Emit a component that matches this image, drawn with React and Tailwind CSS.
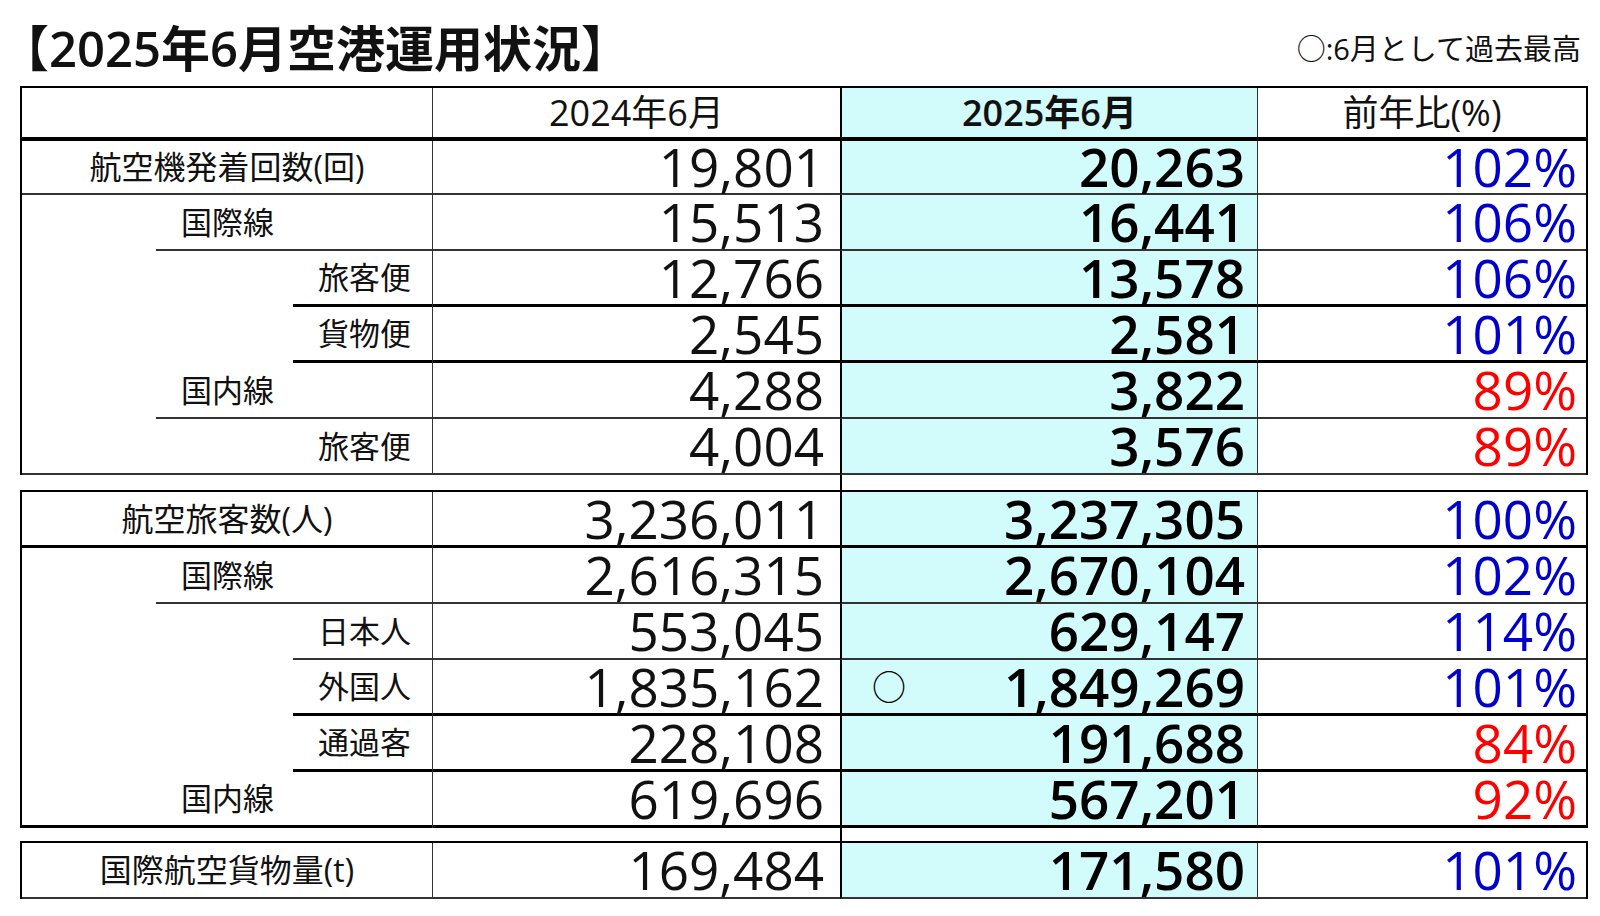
const sections = [
  [
    { label: '航空機発着回数(回)', align: 'center', indent: 0, line: 'thin', h: 'h-[54px]', a: '19,801', b: '20,263', pct: '102%', up: true },
    { label: '国際線', align: 'left', indent: 1, line: 'thin', a: '15,513', b: '16,441', pct: '106%', up: true },
    { label: '旅客便', align: 'right', indent: 2, line: 'thick', a: '12,766', b: '13,578', pct: '106%', up: true },
    { label: '貨物便', align: 'right', indent: 2, line: 'thick', a: '2,545', b: '2,581', pct: '101%', up: true },
    { label: '国内線', align: 'left', indent: 1, line: 'thin', a: '4,288', b: '3,822', pct: '89%', up: false },
    { label: '旅客便', align: 'right', indent: 0, line: 'thin', a: '4,004', b: '3,576', pct: '89%', up: false },
  ],
  [
    { label: '航空旅客数(人)', align: 'center', indent: 0, line: 'thick', a: '3,236,011', b: '3,237,305', pct: '100%', up: true },
    { label: '国際線', align: 'left', indent: 1, line: 'thin', a: '2,616,315', b: '2,670,104', pct: '102%', up: true },
    { label: '日本人', align: 'right', indent: 2, line: 'thin', a: '553,045', b: '629,147', pct: '114%', up: true },
    { label: '外国人', align: 'right', indent: 2, line: 'thick', a: '1,835,162', b: '1,849,269', pct: '101%', up: true, record: true },
    { label: '通過客', align: 'right', indent: 2, line: 'thick', a: '228,108', b: '191,688', pct: '84%', up: false },
    { label: '国内線', align: 'leftFull', indent: 0, line: 'thick', a: '619,696', b: '567,201', pct: '92%', up: false },
  ],
  [
    { label: '国際航空貨物量(t)', align: 'center', indent: 0, line: 'thin', a: '169,484', b: '171,580', pct: '101%', up: true },
  ],
];

const indentW = ['hidden', 'w-[134px] shrink-0', 'w-[271px] shrink-0'];
const lineB = {
  thin: 'border-b-2 border-[#333]',
  thick: 'border-b-[3px] border-black',
};
const alignC = {
  center: 'justify-center text-[32px]',
  left: 'pl-[25px] text-[31px]',
  leftFull: 'pl-[159px] text-[31px]',
  right: 'justify-end pr-[21px] text-[31px]',
};

const cols = 'grid grid-cols-[411px_407px_418px_328px]';

function Row({ row }) {
  const b = lineB[row.line];
  return (
    <div className={`${cols} ${row.h || 'h-[56px]'}`}>
      <div className="flex border-r border-[#333]">
        <div className={indentW[row.indent]} />
        <div className={`flex flex-1 items-center leading-none text-[#111] ${alignC[row.align]} ${b}`}>
          {row.label}
        </div>
      </div>
      <div className={`flex items-center justify-end pr-[16px] text-[53px] leading-[50px] text-[#111] ${b}`}>
        {row.a}
      </div>
      <div className={`flex items-center justify-between border-x-2 border-l-black border-r-[#333] border-r bg-[#d2fbfb] pl-[30px] pr-[12px] text-[53px] font-semibold leading-[50px] text-black ${b}`}>
        <span className="text-[34px] font-normal">{row.record ? '○' : ''}</span>
        <span>{row.b}</span>
      </div>
      <div className={`flex items-center justify-end pr-[9px] text-[53px] font-medium leading-[50px] ${row.up ? 'text-[#0000cc]' : 'text-[#ff0000]'} ${b}`}>
        {row.pct}
      </div>
    </div>
  );
}

function Gap({ h }) {
  return <div className={`${h} ml-[820px] w-0 border-l-2 border-black`} />;
}

export default function App() {
  return (
    <div className="h-[916px] w-[1600px] overflow-hidden bg-white font-['Open_Sans','Noto_Sans_CJK_JP',sans-serif] text-[#111]">
      <div className="flex h-[86px] items-center justify-between pl-0 pr-[19px] pt-[10px]">
        <h1 className="text-[49px] font-semibold leading-none">【2025年6月空港運用状況】</h1>
        <div className="text-[29px] leading-none">○:6月として過去最高</div>
      </div>

      <div className="ml-[20px] w-[1568px]">
        <div className="border-x-2 border-t-2 border-black">
          <div className={`${cols} h-[53px] border-b-4 border-black text-[36px] leading-none`}>
            <div className="border-r border-[#333]" />
            <div className="flex items-center justify-center">2024年6月</div>
            <div className="flex items-center justify-center border-x-2 border-l-black border-r-[#333] border-r bg-[#d2fbfb] font-semibold">
              2025年6月
            </div>
            <div className="flex items-center justify-center">前年比(%)</div>
          </div>
          {sections[0].map((r, i) => (
            <Row key={i} row={r} />
          ))}
        </div>
        <Gap h="h-[15px]" />
        <div className="border-x-2 border-t-2 border-black">
          {sections[1].map((r, i) => (
            <Row key={i} row={r} />
          ))}
        </div>
        <Gap h="h-[13px]" />
        <div className="border-x-2 border-t-2 border-black">
          {sections[2].map((r, i) => (
            <Row key={i} row={r} />
          ))}
        </div>
      </div>
    </div>
  );
}
